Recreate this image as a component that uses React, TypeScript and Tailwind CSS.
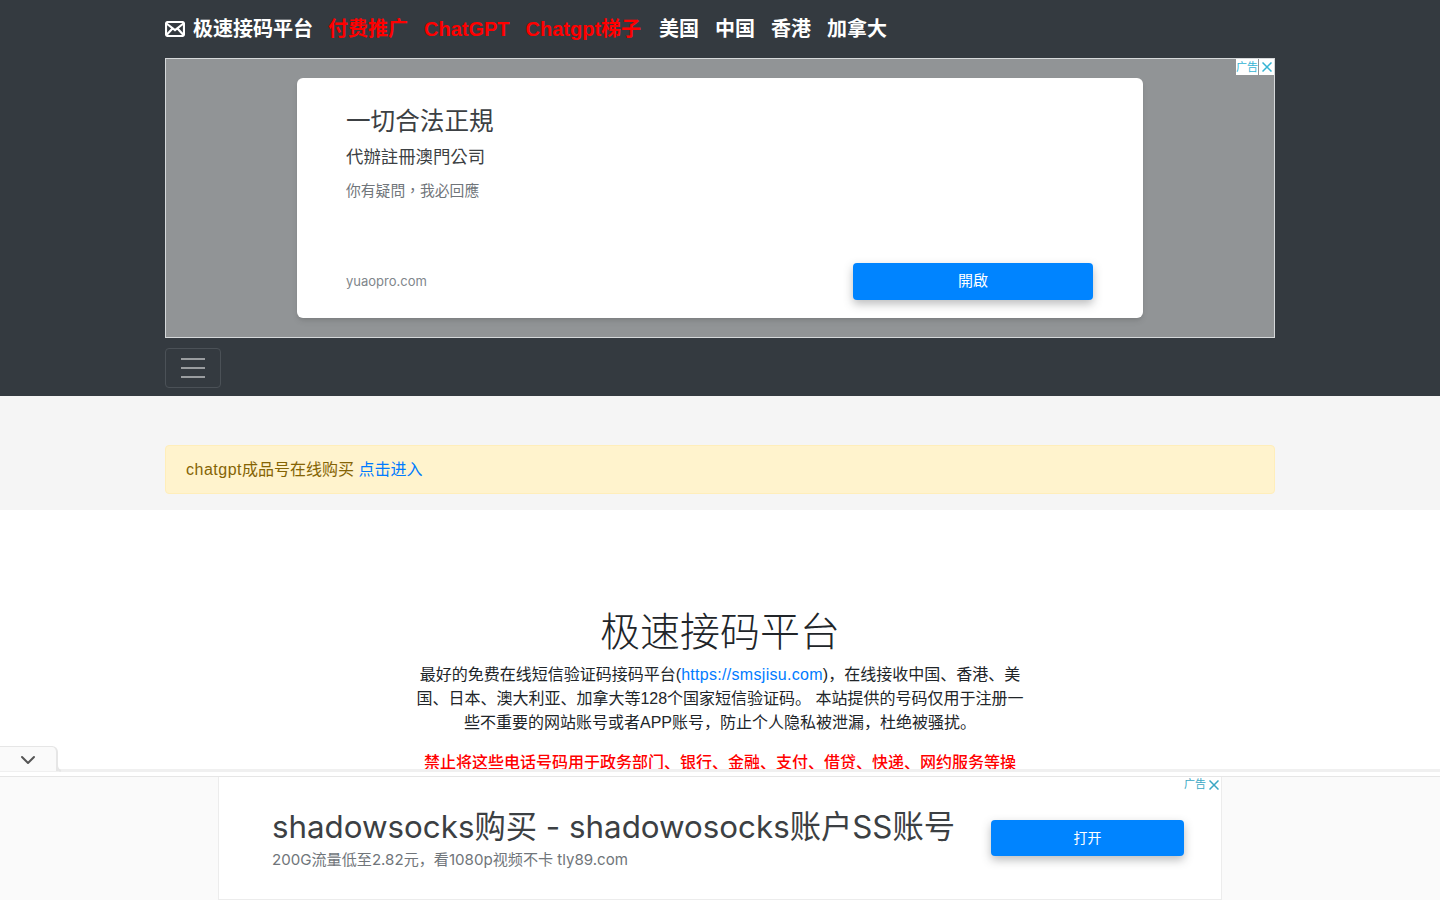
import { ChevronDown } from "lucide-react";

const font = { fontFamily: '"Liberation Sans", "Noto Sans CJK SC", sans-serif' };
const adFont = { fontFamily: '"Inter", "Noto Sans CJK TC", sans-serif' };
const bottomAdFont = { fontFamily: '"Inter", "Noto Sans CJK SC", sans-serif' };

const navLinks = [
  { label: "付费推广", red: true },
  { label: "ChatGPT", red: true },
  { label: "Chatgpt梯子", red: true, extra: "mr-[2px]" },
  { label: "美国" },
  { label: "中国" },
  { label: "香港" },
  { label: "加拿大" },
];

function MailIcon() {
  return (
    <svg width="20" height="16" viewBox="0 0 20 16" fill="none" stroke="white" strokeWidth="2.2">
      <rect x="1" y="1" width="18" height="14" rx="2" />
      <path d="M1.5 2.5 10 9l8.5-6.5M1.5 14 7.5 7.5M18.5 14l-6-6.5" />
    </svg>
  );
}

function CloseIcon() {
  return (
    <svg width="10" height="10" viewBox="0 0 10 10" fill="none" stroke="currentColor" strokeWidth="1.5">
      <path d="M.5.5l9 9M9.5.5l-9 9" />
    </svg>
  );
}

function Navbar() {
  return (
    <nav className="h-[396px] bg-[#343a40] shadow-sm">
      <div className="mx-auto w-[1110px]">
        <div className="flex h-[58px] items-center gap-4 text-[20px] leading-[30px] font-bold">
          <a className="mr-[-1px] flex items-center gap-2 text-white">
            <MailIcon />
            极速接码平台
          </a>
          {navLinks.map((l) => (
            <a key={l.label} className={`${l.red ? "text-[#ff0000]" : "text-white"} ${l.extra ?? ""}`}>
              {l.label}
            </a>
          ))}
        </div>
        <div className="relative flex h-[280px] items-center justify-center border border-[#d5d8da] bg-[#919496]" style={adFont}>
          <div className="absolute top-0 right-0 flex h-[16px] gap-px">
            <span className="flex w-[22px] items-center justify-center bg-white text-[11px] leading-none text-[#35b4d4]">广告</span>
            <span className="flex w-[15px] items-center justify-center bg-white text-[#35b4d4]">
              <CloseIcon />
            </span>
          </div>
          <div className="flex h-[240px] w-[846px] flex-col rounded-md bg-white pt-[26px] pr-[50px] pb-[18px] pl-[49px] shadow-md">
            <div className="text-[24.6px] leading-[35px] text-[#3c4043]">一切合法正規</div>
            <div className="mt-[5px] text-[17.4px] leading-[26px] text-[#3c4043]">代辦註冊澳門公司</div>
            <div className="mt-[10px] text-[14.8px] leading-[22px] text-[#70757a]">你有疑問，我必回應</div>
            <div className="mt-auto flex items-center justify-between">
              <span className="text-[13px] text-[#80868b]">yuaopro.com</span>
              <button className="h-[37px] w-[240px] rounded bg-[#0084ff] text-[15px] text-white shadow-[0_4px_10px_rgba(60,64,67,0.35)]">
                開啟
              </button>
            </div>
          </div>
        </div>
        <button className="mt-[10px] flex h-[40px] w-[56px] flex-col items-center justify-center gap-[7px] rounded border border-[#4b5157]">
          <span className="h-[2px] w-6 bg-[#9a9da0]" />
          <span className="h-[2px] w-6 bg-[#9a9da0]" />
          <span className="h-[2px] w-6 bg-[#9a9da0]" />
        </button>
      </div>
    </nav>
  );
}

function BottomAd() {
  return (
    <div className="fixed inset-x-0 bottom-0 h-[154px]" style={bottomAdFont}>
      <div className="relative h-[26px]">
        <div className="absolute inset-x-0 bottom-0 h-[3px] bg-[#f0f0f0]" />
        <div className="absolute top-0 left-0 flex h-[25px] w-[58px] items-center justify-center rounded-tr-md border-t border-r-2 border-[#e6e6e6] bg-[#fafafa] pt-[2px] text-[#555]">
          <ChevronDown size={24} strokeWidth={2} />
        </div>
        <svg className="absolute top-[19px] left-[56px]" width="8" height="7" viewBox="0 0 8 7" fill="none" stroke="#e6e6e6" strokeWidth="2">
          <path d="M1 0c0 3 1 5 4 6" />
        </svg>
      </div>
      <div className="mt-[4px] flex h-[124px] justify-center border-t border-[#e6e6e6] bg-[#fafafa]">
        <div className="relative flex w-[1004px] items-center border-x border-b border-[#ececec] bg-white pr-[37px] pb-[1px] pl-[53px]">
          <div className="absolute top-0 right-[2px] flex items-center gap-[3px] text-[#3aa7c4]">
            <span className="text-[11px] leading-[15px]">广告</span>
            <CloseIcon />
          </div>
          <div className="mt-[1px] w-[719px]">
            <div className="text-[31.3px] leading-[42px] whitespace-nowrap text-[#3c4043]">shadowsocks购买 - shadowosocks账户SS账号</div>
            <div className="mt-px text-[15.1px] leading-[22px] text-[#70757a]">200G流量低至2.82元，看1080p视频不卡 tly89.com</div>
          </div>
          <button className="h-[36px] w-[193px] rounded bg-[#0084ff] text-[14px] text-white shadow-[0_4px_10px_rgba(60,64,67,0.35)]">
            打开
          </button>
        </div>
      </div>
    </div>
  );
}

export default function App() {
  return (
    <div className="h-[900px] overflow-hidden bg-white text-[16px] text-[#212529]" style={font}>
      <Navbar />
      <div className="h-[114px] bg-[#f5f5f5] pt-[49px]">
        <div className="mx-auto flex h-[49px] w-[1110px] items-center rounded border border-[#ffeeba] bg-[#fff3cd] px-5 text-[#856404]">
          <span className="tracking-[0.5px]">chatgpt</span>成品号在线购买&nbsp;<a className="text-[#007bff]">点击进入</a>
        </div>
      </div>
      <section className="pt-[92px] text-center">
        <h1 className="text-[40px] leading-[60px] font-light">极速接码平台</h1>
        <p className="mx-auto mt-px w-[610px] leading-[24px]">
          最好的免费在线短信验证码接码平台(<a className="tracking-[0.3px] text-[#007bff]">https://smsjisu.com</a>)，在线接收中国、香港、美国、日本、澳大利亚、加拿大等128个国家短信验证码。 本站提供的号码仅用于注册一些不重要的网站账号或者APP账号，防止个人隐私被泄漏，杜绝被骚扰。
        </p>
        <p className="mt-[16px] leading-[24px] font-medium text-[#ff0000]">禁止将这些电话号码用于政务部门、银行、金融、支付、借贷、快递、网约服务等操</p>
      </section>
      <BottomAd />
    </div>
  );
}
